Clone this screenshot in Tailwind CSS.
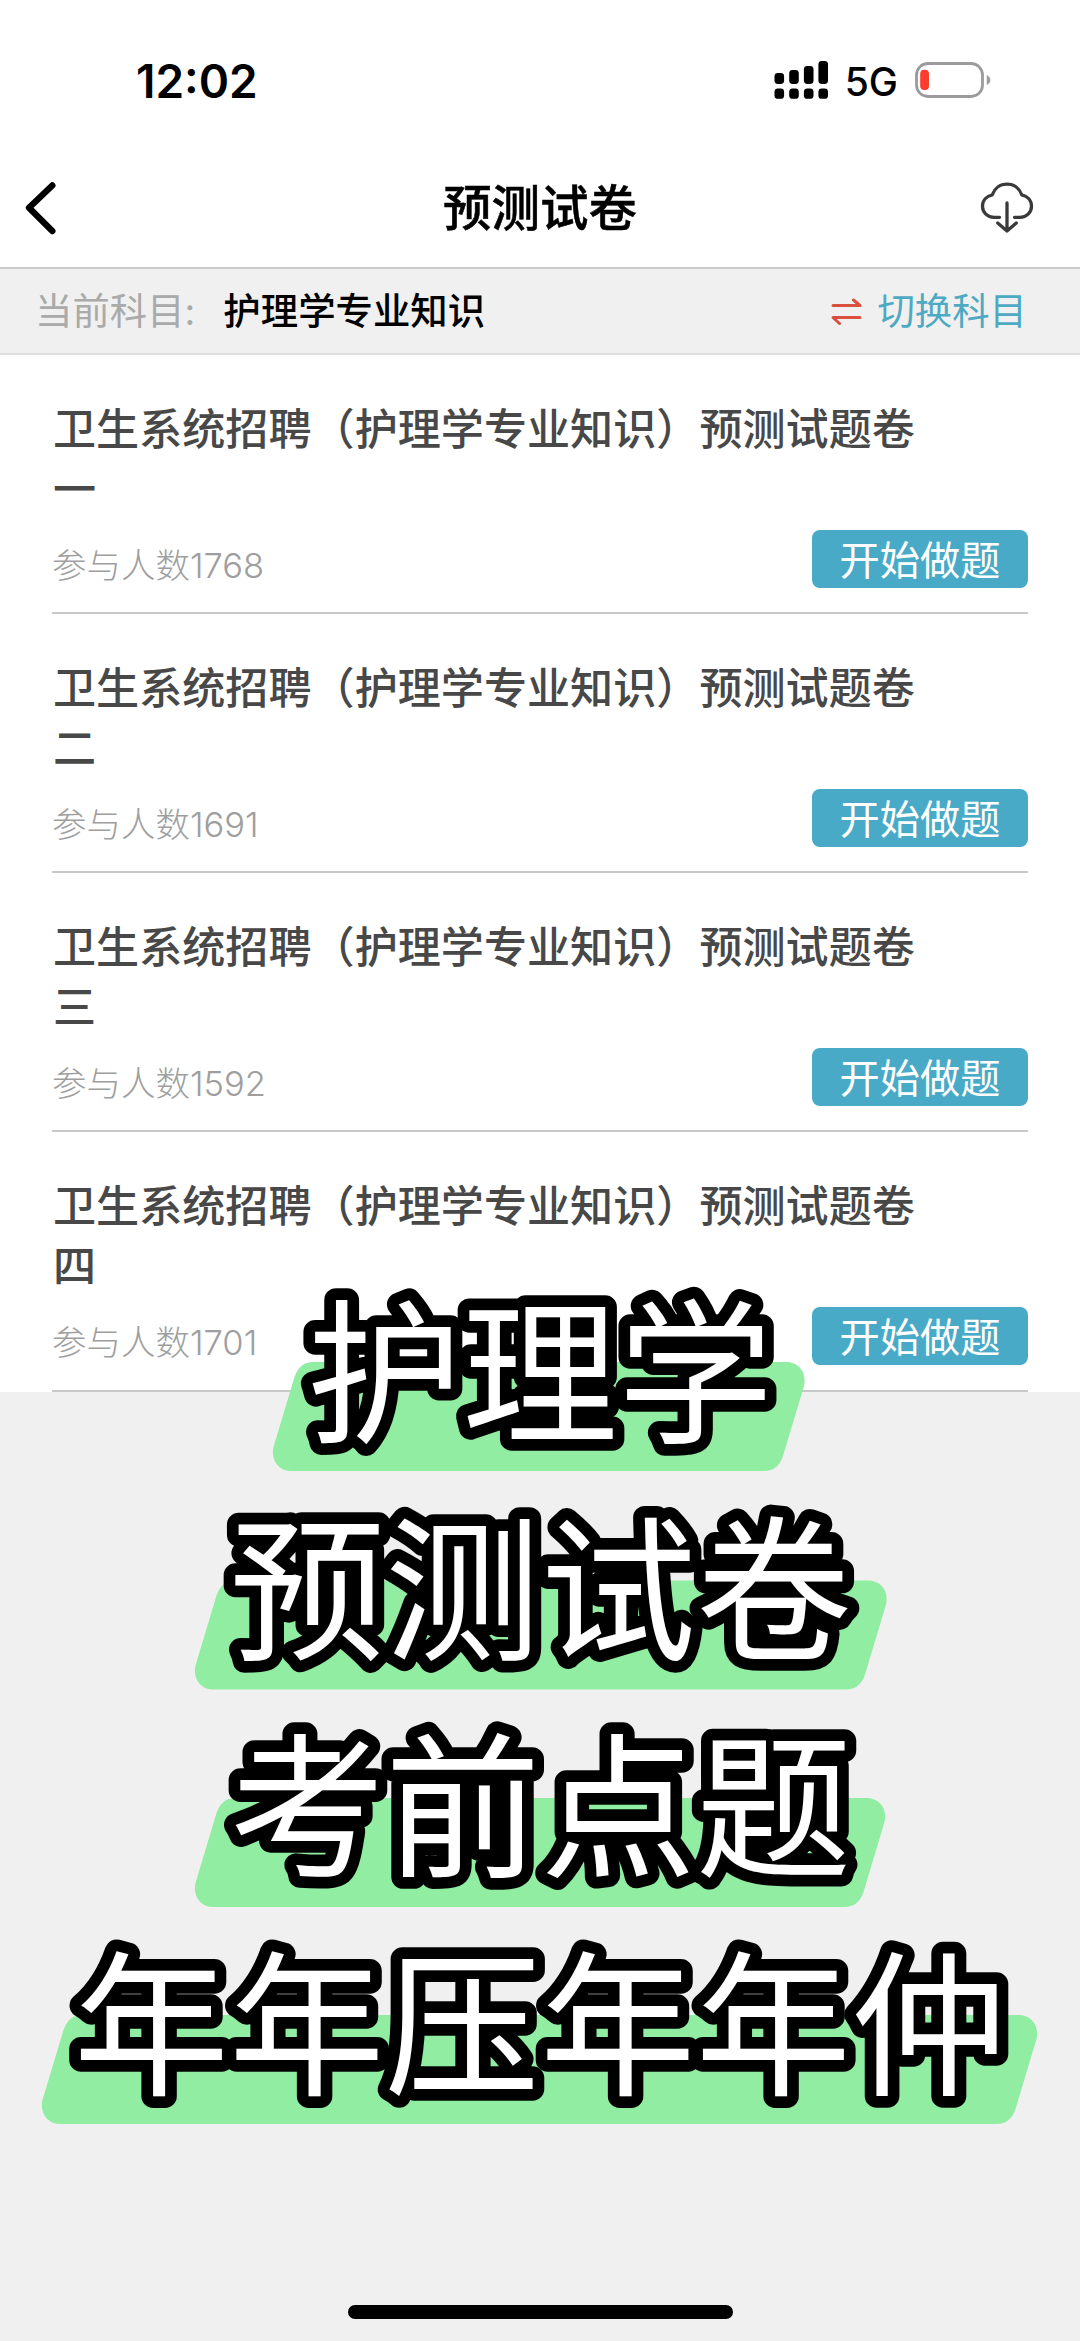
<!DOCTYPE html>
<html lang="zh-CN">
<head>
<meta charset="utf-8">
<title>预测试卷</title>
<script src="https://cdn.jsdelivr.net/npm/@tailwindcss/browser@4"></script>
</head>
<body class="bg-white">
<div class="relative flex h-[2341px] w-[1080px] flex-col overflow-hidden bg-[#f0f0f0] font-['Inter','Noto_Sans_CJK_SC',sans-serif]">

  <!-- Status bar -->
  <div class="flex h-[146px] items-start justify-between bg-white pt-[50px] pr-[89px] pl-[136px]">
    <span class="text-[46px] leading-[62px] font-semibold text-black">12:02</span>
    <div class="flex h-[60px] items-center">
      <svg class="mr-[17px] h-[38px] w-[54px]" viewBox="0 0 54 38">
        <rect x="0.5" y="12" width="9.6" height="11" rx="3.4"/>
        <rect x="15.2" y="9" width="9.6" height="14" rx="3.4"/>
        <rect x="29.9" y="5" width="9.6" height="18" rx="3.4"/>
        <rect x="44.4" y="0" width="9.6" height="23" rx="3.4"/>
        <rect x="0.5" y="27.5" width="9.6" height="10.3" rx="3.4"/>
        <rect x="15.2" y="27.5" width="9.6" height="10.3" rx="3.4"/>
        <rect x="29.9" y="27.5" width="9.6" height="10.3" rx="3.4"/>
        <rect x="44.4" y="27.5" width="9.6" height="10.3" rx="3.4"/>
      </svg>
      <span class="mr-[17px] pt-[4px] text-[39px] leading-[60px] font-medium text-black">5G</span>
      <svg class="h-[36px] w-[76px]" viewBox="0 0 76 36">
        <rect x="1.5" y="1.5" width="66" height="33" rx="11.5" fill="none" stroke="#9b9b9d" stroke-width="2.8"/>
        <rect x="5.2" y="7.8" width="8.8" height="20.2" rx="4" fill="#fb3d2d"/>
        <path d="M71.8 13C74 14 75.3 16 75.3 18S74 22 71.8 23Z" fill="#9b9b9d"/>
      </svg>
    </div>
  </div>

  <!-- Navigation bar -->
  <div class="flex h-[123px] items-center justify-between border-b-2 border-[#cacaca] bg-white pr-[46px] pl-[24px]">
    <svg class="mt-[2px] h-[54px] w-[54px]" viewBox="0 0 54 54" fill="none" stroke="#000" stroke-width="6.4" stroke-linecap="round" stroke-linejoin="round">
      <path d="M28.3 4.5L5 26.8L28.3 50"/>
    </svg>
    <h1 class="mt-[4px] ml-[22px] text-[48.500px] leading-[60px] font-medium text-black [-webkit-text-stroke:0.5px_#000]">预测试卷</h1>
    <svg class="h-[52px] w-[54px]" viewBox="0 0 54 52" fill="none" stroke="#3a3a3a" stroke-width="3.3" stroke-linecap="round" stroke-linejoin="round">
      <path d="M19.500 36.300H14C7.500 36.300 2.500 31.500 2.500 25.300C2.500 19.500 6.500 15 12.300 13.800C14.500 7.300 20 3.200 27 3.200S39.500 7.300 41.700 13.800C47.500 15 51.500 19.500 51.500 25.300C51.500 31.500 46.500 36.300 40 36.300H34.500"/>
      <path d="M27 22V50M17.700 42L27 50L36.300 42"/>
    </svg>
  </div>

  <!-- Current subject -->
  <div class="flex h-[86px] items-center border-b-2 border-[#dedede] bg-[#f0f0f0] pt-[2px] pr-[53px] pl-[35px] text-[37.4px] leading-[52px]">
    <span class="text-[#aaa]">当前科目:</span>
    <span class="ml-[28px] font-medium text-black">护理学专业知识</span>
    <span class="ml-auto flex items-center text-[#4ea9c3]">
      <svg class="mr-[15px] h-[28px] w-[31px]" viewBox="0 0 31 28" fill="none" stroke="#d9503f" stroke-width="3" stroke-linecap="round" stroke-linejoin="round">
        <path d="M2 7.500H29L22.500 2M29 19.500H2L8.500 25.500"/>
      </svg>
      切换科目
    </span>
  </div>

  <!-- Paper list -->
  <ul class="flex flex-col bg-white px-[52px]">
    <li class="flex h-[259px] flex-col border-b-2 border-[#c8c8c8] pt-[44px]">
      <h2 class="w-[880px] pl-px text-[43.1px] leading-[60px] font-medium text-[#484848]">卫生系统招聘（护理学专业知识）预测试题卷一</h2>
      <div class="mt-[11px] flex h-[58px] items-center justify-between">
        <span class="pt-[14px] text-[34.5px] leading-[44px] font-light text-[#9e9e9e]">参与人数1768</span>
        <button class="h-[58px] w-[216px] rounded-[8px] bg-[#49aac7] pt-[3px] text-[40.200px] leading-[55px] text-white">开始做题</button>
      </div>
    </li>
    <li class="flex h-[259px] flex-col border-b-2 border-[#c8c8c8] pt-[44px]">
      <h2 class="w-[880px] pl-px text-[43.1px] leading-[60px] font-medium text-[#484848]">卫生系统招聘（护理学专业知识）预测试题卷二</h2>
      <div class="mt-[11px] flex h-[58px] items-center justify-between">
        <span class="pt-[14px] text-[34.5px] leading-[44px] font-light text-[#9e9e9e]">参与人数1691</span>
        <button class="h-[58px] w-[216px] rounded-[8px] bg-[#49aac7] pt-[3px] text-[40.200px] leading-[55px] text-white">开始做题</button>
      </div>
    </li>
    <li class="flex h-[259px] flex-col border-b-2 border-[#c8c8c8] pt-[44px]">
      <h2 class="w-[880px] pl-px text-[43.1px] leading-[60px] font-medium text-[#484848]">卫生系统招聘（护理学专业知识）预测试题卷三</h2>
      <div class="mt-[11px] flex h-[58px] items-center justify-between">
        <span class="pt-[14px] text-[34.5px] leading-[44px] font-light text-[#9e9e9e]">参与人数1592</span>
        <button class="h-[58px] w-[216px] rounded-[8px] bg-[#49aac7] pt-[3px] text-[40.200px] leading-[55px] text-white">开始做题</button>
      </div>
    </li>
    <li class="flex h-[260px] flex-col border-b-2 border-[#c8c8c8] pt-[44px]">
      <h2 class="w-[880px] pl-px text-[43.1px] leading-[60px] font-medium text-[#484848]">卫生系统招聘（护理学专业知识）预测试题卷四</h2>
      <div class="mt-[11px] flex h-[58px] items-center justify-between">
        <span class="pt-[14px] text-[34.5px] leading-[44px] font-light text-[#9e9e9e]">参与人数1701</span>
        <button class="h-[58px] w-[216px] rounded-[8px] bg-[#49aac7] pt-[3px] text-[40.200px] leading-[55px] text-white">开始做题</button>
      </div>
    </li>
  </ul>

  <!-- Home indicator -->
  <div class="mx-auto mt-auto mb-[22px] h-[14px] w-[385px] rounded-full bg-black"></div>

  <!-- Caption sticker over the list -->
  <svg class="absolute top-[1200px] left-0 h-[1000px] w-[1080px] font-['Noto_Sans_CJK_SC',sans-serif] text-[155.500px]" viewBox="0 1200 1080 1000">
    <g fill="#90eda2">
      <path d="M313.500 1362H786C799 1362 807 1373 804 1386L783 1456Q778 1471 764 1471H291.500C278.500 1471 270.500 1460 273.500 1447L294.500 1377Q299.500 1362 313.500 1362Z"/>
      <path d="M235.500 1580.500H868C881 1580.500 889 1591.500 886 1604.500L865 1674.500Q860 1689.500 846 1689.500H213.500C200.500 1689.500 192.500 1678.500 195.500 1665.500L216.500 1595.500Q221.500 1580.500 235.500 1580.500Z"/>
      <path d="M235.500 1798H866.500C879.500 1798 887.500 1809 884.500 1822L863.500 1892Q858.500 1907 844.500 1907H213.500C200.500 1907 192.500 1896 195.500 1883L216.500 1813Q221.500 1798 235.500 1798Z"/>
      <path d="M82.500 2015H1018.500C1031.500 2015 1039.500 2026 1036.500 2039L1015.500 2109Q1010.500 2124 996.500 2124H60.500C47.500 2124 39.500 2113 42.500 2100L63.500 2030Q68.500 2015 82.500 2015Z"/>
    </g>
    <g class="[paint-order:stroke_fill]" fill="#fff" stroke="#000" stroke-width="23.500" stroke-linejoin="round" text-anchor="middle">
      <text x="540" y="1431">护理学</text>
      <text x="540.500" y="1648">预测试卷</text>
      <text x="540.500" y="1865.300">考前点题</text>
      <text x="540" y="2082.800">年年压年年仲</text>
    </g>
  </svg>
</div>
</body>
</html>
